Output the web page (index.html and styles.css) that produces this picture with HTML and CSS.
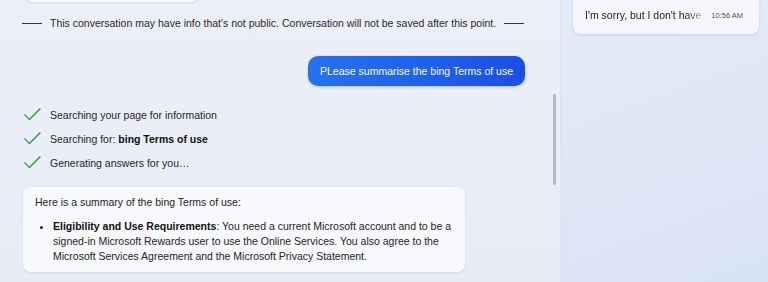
FILE: index.html
```html
<!DOCTYPE html>
<html>
<head>
<meta charset="utf-8">
<link rel="stylesheet" href="styles.css">
</head>
<body>
<div class="app">
  <main class="chat">
    <div class="prev-card"></div>
    <div class="notice">
      <span class="rule"></span>
      <span class="notice-text">This conversation may have info that's not public. Conversation will not be saved after this point.</span>
      <span class="rule"></span>
    </div>
    <div class="user-row">
      <div class="bubble">PLease summarise the bing Terms of use</div>
    </div>
    <ul class="steps">
      <li class="step"><svg class="check" viewBox="0 0 17 13" width="17" height="13"><polyline points="0.6,6.4 5.4,11.6 16.4,0.6" fill="none" stroke="#2f9a45" stroke-width="1.35"/></svg><span>Searching your page for information</span></li>
      <li class="step"><svg class="check" viewBox="0 0 17 13" width="17" height="13"><polyline points="0.6,6.4 5.4,11.6 16.4,0.6" fill="none" stroke="#2f9a45" stroke-width="1.35"/></svg><span>Searching for: <b>bing Terms of use</b></span></li>
      <li class="step"><svg class="check" viewBox="0 0 17 13" width="17" height="13"><polyline points="0.6,6.4 5.4,11.6 16.4,0.6" fill="none" stroke="#2f9a45" stroke-width="1.35"/></svg><span>Generating answers for you…</span></li>
    </ul>
    <div class="answer">
      <p class="answer-intro">Here is a summary of the bing Terms of use:</p>
      <ul class="answer-list">
        <li><b>Eligibility and Use Requirements</b>: You need a current Microsoft account and to be a signed-in Microsoft Rewards user to use the Online Services. You also agree to the Microsoft Services Agreement and the Microsoft Privacy Statement.</li>
      </ul>
    </div>
    <div class="scrollbar"></div>
  </main>
  <aside class="side">
    <div class="recent">
      <span class="recent-text">I'm sorry, but I don't have</span>
      <span class="recent-time">10:56 AM</span>
    </div>
  </aside>
</div>
</body>
</html>
```

FILE: styles.css
```css
* { box-sizing: border-box; }
html, body {
  margin: 0;
  padding: 0;
  width: 768px;
  height: 282px;
  overflow: hidden;
  font-family: "Liberation Sans", Arial, sans-serif;
  font-size: 10.5px;
  color: #222;
}
.app {
  display: flex;
  width: 768px;
  height: 282px;
}
.chat {
  position: relative;
  width: 561px;
  flex: none;
  height: 282px;
  background: linear-gradient(180deg, #eceff7 0%, #e9edf6 60%, #e6ebf5 100%);
  border-right: 1px solid #dde3ee;
  padding: 0 35px 0 22px;
  display: flex;
  flex-direction: column;
}
.prev-card {
  margin: -20px 0 0 2px;
  width: 176px;
  height: 22px;
  background: #f7f8fc;
  border-radius: 0 0 9px 9px;
  box-shadow: 0 1px 2px rgba(40, 50, 80, 0.12);
}
.notice {
  margin-top: 14px;
  display: flex;
  align-items: center;
  gap: 8px;
  height: 14px;
  line-height: 14px;
  color: #2a2a2a;
}
.rule {
  width: 20px;
  height: 1px;
  background: #333;
  flex: none;
}
.user-row {
  margin-top: 26px;
  display: flex;
  justify-content: flex-end;
}
.bubble {
  height: 30px;
  line-height: 30px;
  padding: 0 12px;
  border-radius: 10px;
  color: #fff;
  background: linear-gradient(90deg, #2572ee 0%, #1e60ec 55%, #1a4ee6 100%);
  box-shadow: 0 1px 3px rgba(20, 60, 200, 0.25);
}
.steps {
  list-style: none;
  margin: 17px 0 0 0;
  padding: 0 0 0 2px;
}
.step {
  display: flex;
  align-items: center;
  height: 24px;
  gap: 9px;
  color: #262626;
}
.check { flex: none; margin-top: -1px; }
.step b { font-weight: bold; color: #111; }
.answer {
  margin-top: 12px;
  width: 442px;
  margin-left: 1px;
  background: #f8f9fc;
  border-radius: 8px;
  padding: 8px 12px 8px 12px;
  box-shadow: 0 1px 3px rgba(40, 50, 80, 0.10);
  line-height: 15px;
  color: #242424;
}
.answer-intro { margin: 0 0 9px 0; }
.answer-list {
  margin: 0;
  padding-left: 18px;
}
.answer-list b { color: #111; }
.scrollbar {
  position: absolute;
  left: 553px;
  top: 94px;
  width: 3px;
  height: 91px;
  border-radius: 2px;
  background: #b3b8c3;
}
.side {
  flex: 1;
  height: 282px;
  background: linear-gradient(160deg, #e3eaf7 0%, #dfe7f6 50%, #d8e3f5 100%);
  padding: 0 9px 0 12px;
}
.recent {
  margin-top: -10px;
  padding: 18px 16px 11px 12px;
  background: #f4f6fb;
  border-radius: 8px;
  box-shadow: 0 1px 3px rgba(40, 50, 90, 0.12);
  display: flex;
  align-items: center;
  justify-content: space-between;
  line-height: 15px;
}
.recent-text {
  white-space: nowrap;
  overflow: hidden;
  width: 118px;
  color: #222;
  -webkit-mask-image: linear-gradient(90deg, #000 85%, rgba(0,0,0,0.25) 100%);
  mask-image: linear-gradient(90deg, #000 85%, rgba(0,0,0,0.25) 100%);
}
.recent-time {
  font-size: 7.5px;
  color: #555;
}
```
